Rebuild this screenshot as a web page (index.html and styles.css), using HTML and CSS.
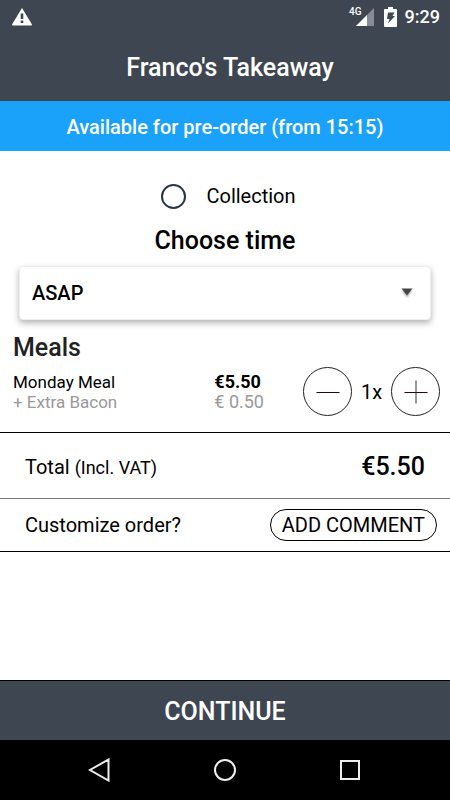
FILE: index.html
```html
<!DOCTYPE html>
<html lang="en">
<head>
<meta charset="utf-8">
<meta name="viewport" content="width=device-width, initial-scale=1">
<title>Franco's Takeaway</title>
<link rel="stylesheet" href="styles.css">
</head>
<body>
<header class="top">
  <div class="status">
    <svg class="warning" width="20" height="18" viewBox="0 0 20 18" aria-hidden="true"><path fill="#fff" fill-rule="evenodd" d="M10 0 20 16.500 19.500 17.500H0.500L0 16.500ZM8.700 5.500v5.500h2.600V5.500ZM8.700 12.500v2.500h2.600V12.500Z"/></svg>
    <div class="status-right">
      <span class="network">4G</span>
      <svg class="signal" width="18" height="18" viewBox="0 0 18 18" aria-hidden="true"><path fill="#868c95" d="M18 0V18H0Z"/><path fill="#fff" d="M11 7V18H0Z"/></svg>
      <svg class="battery" width="13" height="20" viewBox="0 0 13 20" aria-hidden="true"><path fill="#fff" d="M4 0h5v2h3q1 0 1 1v16q0 1-1 1H1q-1 0-1-1V3q0-1 1-1h3Z"/><path fill="#3e4651" d="M4 5.500H10.500L8.500 9H11L4 16.500 5.500 12H3Z"/></svg>
      <time>9:29</time>
    </div>
  </div>
  <h1>Franco's Takeaway</h1>
</header>
<p class="banner">Available for pre-order (from 15:15)</p>
<main>
  <label class="collection"><input type="radio" name="method">Collection</label>
  <h2 class="choose"><label for="time">Choose time</label></h2>
  <div class="picker">
    <select id="time"><option>ASAP</option></select>
    <svg class="arrow" width="12" height="8" viewBox="0 0 12 8" aria-hidden="true"><path fill="#444" d="M0.500 0.500h11L6 7.500Z"/></svg>
  </div>
  <section class="meals">
    <h2>Meals</h2>
    <div class="meal">
      <div class="names"><div>Monday Meal</div><div class="extra">+ Extra Bacon</div></div>
      <div class="prices"><div class="price">€5.50</div><div class="extra">€ 0.50</div></div>
      <div class="quantity">
        <button type="button" aria-label="Remove one"><svg width="24" height="24" viewBox="0 0 24 24"><path stroke="#25090f" d="M0.500 12.500h23"/></svg></button>
        <span>1x</span>
        <button type="button" aria-label="Add one"><svg width="24" height="24" viewBox="0 0 24 24"><path stroke="#999" stroke-width="2" d="M12 0.500v23"/><path stroke="#25090f" d="M0.500 12.500h23"/></svg></button>
      </div>
    </div>
  </section>
  <div class="row total"><span>Total <small>(Incl. VAT)</small></span><strong>€5.50</strong></div>
  <div class="row customize"><span>Customize order?</span><button type="button" class="comment">ADD COMMENT</button></div>
</main>
<button type="button" class="continue">CONTINUE</button>
<nav class="system">
  <button type="button" aria-label="Back"><svg width="24" height="24" viewBox="0 0 24 24"><path d="M20.500 1.500v21L2 12Z"/></svg></button>
  <button type="button" aria-label="Home"><svg width="24" height="24" viewBox="0 0 24 24"><circle cx="12" cy="12" r="10"/></svg></button>
  <button type="button" aria-label="Recent apps"><svg width="24" height="24" viewBox="0 0 24 24"><path d="M3 3h18v18H3Z"/></svg></button>
</nav>
</body>
</html>
```
FILE: styles.css
```css
* {
  box-sizing: border-box;
}

body {
  margin: 0;
  min-height: 100vh;
  display: flex;
  flex-direction: column;
  background: #fff;
  color: #000;
  font-family: Roboto, sans-serif;
  font-size: 20px;
}

h1, h2, p {
  margin: 0;
  font-weight: 500;
}

button {
  padding: 0;
  border: 0;
  background: none;
  color: inherit;
  font: inherit;
}

svg {
  display: block;
  fill: none;
}

.top {
  height: 101px;
  background: #3e4651;
  color: #fff;
  text-align: center;
}

.status {
  height: 33px;
  padding: 0 10px 0 12px;
  display: flex;
  align-items: center;
  justify-content: space-between;
}

.status-right {
  display: flex;
  align-items: center;
  font-size: 18px;
  font-weight: 500;
}

.network {
  align-self: flex-start;
  margin-right: -6px;
  font-size: 10px;
  line-height: 12px;
}

.battery {
  margin: 0 8px 0 10px;
}

.top h1 {
  padding-left: 10px;
  font-size: 25px;
  line-height: 70px;
}

.banner {
  padding-top: 2px;
  background: #1aa2fa;
  color: #fff;
  line-height: 48px;
  text-align: center;
}

main {
  flex: 1;
}

.collection {
  margin-top: 29px;
  padding-left: 7px;
  display: flex;
  align-items: center;
  justify-content: center;
  gap: 20px;
  line-height: 32px;
}

.collection input {
  appearance: none;
  width: 25px;
  height: 25px;
  margin: 0;
  border: 2px solid #263446;
  border-radius: 50%;
}

.choose {
  font-size: 25px;
  line-height: 32px;
  padding: 13px 0 9px;
  text-align: center;
}

.picker {
  position: relative;
  margin: 0 19px;
}

.picker select {
  appearance: none;
  display: block;
  width: 100%;
  height: 54px;
  padding: 0 12px;
  border: 1px solid #eee;
  border-radius: 4px;
  background: #fff;
  box-shadow: 0 3px 6px rgba(0, 0, 0, 0.3);
  color: #000;
  font: 500 20px Roboto, sans-serif;
}

.arrow {
  position: absolute;
  right: 18px;
  top: 22px;
  filter: drop-shadow(0 2px 1px rgba(0, 0, 0, 0.3));
  pointer-events: none;
}

.meals {
  padding: 13px 10px 16px 13px;
}

.meals h2 {
  color: #222;
  font-size: 25px;
  line-height: 30px;
}

.meal {
  display: flex;
  align-items: center;
  margin-top: 4px;
  font-size: 18px;
  line-height: 20px;
}

.names {
  flex: 1;
  font-size: 17px;
}

.extra {
  color: #999;
}

.price {
  font-weight: 700;
}

.quantity {
  display: flex;
  align-items: center;
  margin-left: 39px;
  font-size: 20px;
}

.quantity span {
  width: 39px;
  text-align: center;
}

.quantity button {
  display: grid;
  place-items: center;
  width: 49px;
  height: 49px;
  border: 1px solid #222;
  border-radius: 50%;
}

.row {
  display: flex;
  align-items: center;
  justify-content: space-between;
  padding: 2px 13px 0 25px;
}

.total {
  height: 66px;
  padding-right: 25px;
  border-top: 1px solid #000;
}

.total small {
  font-size: 18px;
}

.total strong {
  font-size: 25px;
  font-weight: 500;
}

.customize {
  height: 54px;
  padding-top: 0;
  border-top: 1px solid #777;
  border-bottom: 1px solid #000;
}

.comment {
  height: 32px;
  padding: 0 11px;
  border: 1px solid #000;
  border-radius: 16px;
}

.continue {
  height: 60px;
  padding-top: 2px;
  border-top: 1px solid #000;
  background: #3e4651;
  color: #fff;
  font-size: 25px;
  font-weight: 500;
}

.system {
  height: 60px;
  padding: 0 37px;
  display: flex;
  align-items: center;
  background: #000;
}

.system button {
  flex: 1;
  display: grid;
  place-items: center;
}

.system svg {
  stroke: #eee;
  stroke-width: 2;
}
```
